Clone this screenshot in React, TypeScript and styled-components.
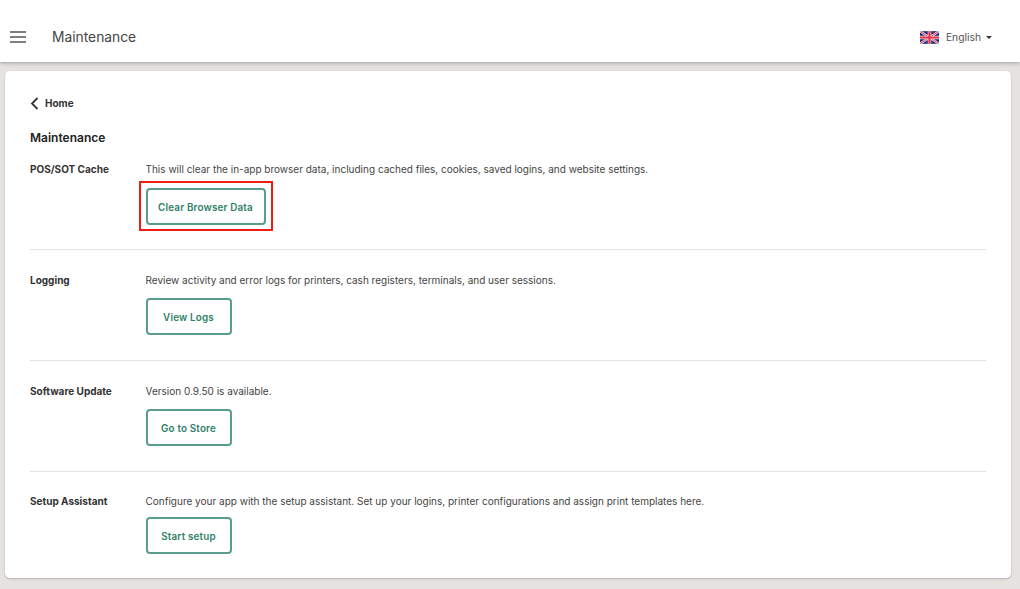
import React from "react";
import styled, { createGlobalStyle } from "styled-components";

const GlobalStyle = createGlobalStyle`
  html, body {
    margin: 0;
    padding: 0;
    background: #e5e2e0;
    font-family: Inter, "Liberation Sans", sans-serif;
  }
`;

const Page = styled.div`
  width: 1020px;
  height: 589px;
  overflow: hidden;
  display: flex;
  flex-direction: column;
`;

const TopBar = styled.header`
  height: 62px;
  flex-shrink: 0;
  background: #fff;
  box-shadow: 0 1px 4px rgba(0, 0, 0, 0.3);
  display: flex;
  align-items: center;
  padding: 12px 28px 0 10px;
  box-sizing: border-box;
  position: relative;
`;

const MenuIcon = styled.svg`
  width: 16px;
  height: 12px;
  margin-right: 26px;
  color: #555;
`;

const PageTitle = styled.div`
  flex: 1;
  font-size: 13.8px;
  color: #444;
`;

const Language = styled.div`
  display: flex;
  align-items: center;
  font-size: 10.3px;
  color: #555;
`;

const Flag = styled.svg`
  width: 19px;
  height: 13px;
  margin-right: 7px;
  border-radius: 2px;
`;

const Caret = styled.span`
  width: 0;
  height: 0;
  margin-left: 5px;
  border-left: 3.5px solid transparent;
  border-right: 3.5px solid transparent;
  border-top: 3.5px solid #333;
`;

const Card = styled.main`
  margin: 9px 9px 0 5px;
  height: 507px;
  box-sizing: border-box;
  background: #fff;
  border-radius: 5px;
  box-shadow: 0 1px 2px rgba(0, 0, 0, 0.22);
  padding: 25px 25px 0;
`;

const BackLink = styled.div`
  display: flex;
  align-items: center;
  height: 14px;
  font-size: 10px;
  font-weight: 700;
  color: #333;
`;

const BackIcon = styled.svg`
  width: 9px;
  height: 13px;
  margin-right: 6px;
  color: #333;
`;

const Heading = styled.h1`
  margin: 20px 0 0;
  font-size: 12px;
  line-height: 16px;
  font-weight: 600;
  color: #222;
`;

const Row = styled.section<{ $top: number; $height: number; $last: boolean }>`
  display: grid;
  grid-template-columns: 115.5px 1fr;
  box-sizing: border-box;
  height: ${(p) => p.$height}px;
  padding-top: ${(p) => p.$top}px;
  border-bottom: ${(p) => (p.$last ? "none" : "1px solid #e2e2e2")};
`;

const RowLabel = styled.div`
  font-size: 10px;
  line-height: 14px;
  font-weight: 700;
  color: #333;
`;

const RowBody = styled.div`
  display: flex;
  flex-direction: column;
  align-items: flex-start;
`;

const Description = styled.p<{ $gap: number }>`
  margin: 0 0 ${(p) => p.$gap}px;
  font-size: 10px;
  line-height: 14px;
  color: #444;
`;

const ActionButton = styled.button<{ $width: number }>`
  width: ${(p) => p.$width}px;
  height: 37px;
  padding: 2px 0 0;
  background: #fff;
  border: 2px solid #5a9d8c;
  border-radius: 4px;
  color: #2f8068;
  font-family: inherit;
  font-size: 9.8px;
  font-weight: 600;
  letter-spacing: 0.2px;
`;

const Highlighted = styled.div`
  position: relative;

  &::after {
    content: "";
    position: absolute;
    left: -7px;
    top: -7px;
    width: 130px;
    height: 46px;
    border: 2px solid #ee1c12;
  }
`;

const rows = [
  {
    label: "POS/SOT Cache",
    text: "This will clear the in-app browser data, including cached files, cookies, saved logins, and website settings.",
    action: "Clear Browser Data",
    width: 120,
    top: 16,
    height: 104,
    gap: 12,
    highlighted: true,
  },
  {
    label: "Logging",
    text: "Review activity and error logs for printers, cash registers, terminals, and user sessions.",
    action: "View Logs",
    width: 86,
    top: 23,
    height: 111,
    gap: 11,
  },
  {
    label: "Software Update",
    text: "Version 0.9.50 is available.",
    action: "Go to Store",
    width: 86,
    top: 23,
    height: 111,
    gap: 11,
  },
  {
    label: "Setup Assistant",
    text: "Configure your app with the setup assistant. Set up your logins, printer configurations and assign print templates here.",
    action: "Start setup",
    width: 86,
    top: 22,
    height: 90,
    gap: 9,
  },
];

function UkFlag() {
  return (
    <Flag viewBox="0 0 60 40">
      <rect width="60" height="40" fill="#1f2f80" />
      <path d="M0 0L60 40M60 0L0 40" stroke="#f4dfe2" strokeWidth="7" />
      <path d="M0 0L60 40M60 0L0 40" stroke="#e5304a" strokeWidth="3" />
      <path d="M30 0V40M0 20H60" stroke="#f4dfe2" strokeWidth="11" />
      <path d="M30 0V40M0 20H60" stroke="#e5304a" strokeWidth="7" />
    </Flag>
  );
}

export default function App() {
  return (
    <Page>
      <GlobalStyle />
      <TopBar>
        <MenuIcon viewBox="0 0 16 12">
          <path d="M0 1H16M0 6H16M0 11H16" stroke="currentColor" strokeWidth="1.4" />
        </MenuIcon>
        <PageTitle>Maintenance</PageTitle>
        <Language>
          <UkFlag />
          English
          <Caret />
        </Language>
      </TopBar>
      <Card>
        <BackLink>
          <BackIcon viewBox="0 0 9 13">
            <path d="M7.5 1L2 6.5L7.5 12" fill="none" stroke="currentColor" strokeWidth="1.8" />
          </BackIcon>
          Home
        </BackLink>
        <Heading>Maintenance</Heading>
        {rows.map((row, i) => {
          const button = <ActionButton $width={row.width}>{row.action}</ActionButton>;
          return (
            <Row key={row.label} $top={row.top} $height={row.height} $last={i === rows.length - 1}>
              <RowLabel>{row.label}</RowLabel>
              <RowBody>
                <Description $gap={row.gap}>{row.text}</Description>
                {row.highlighted ? <Highlighted>{button}</Highlighted> : button}
              </RowBody>
            </Row>
          );
        })}
      </Card>
    </Page>
  );
}
